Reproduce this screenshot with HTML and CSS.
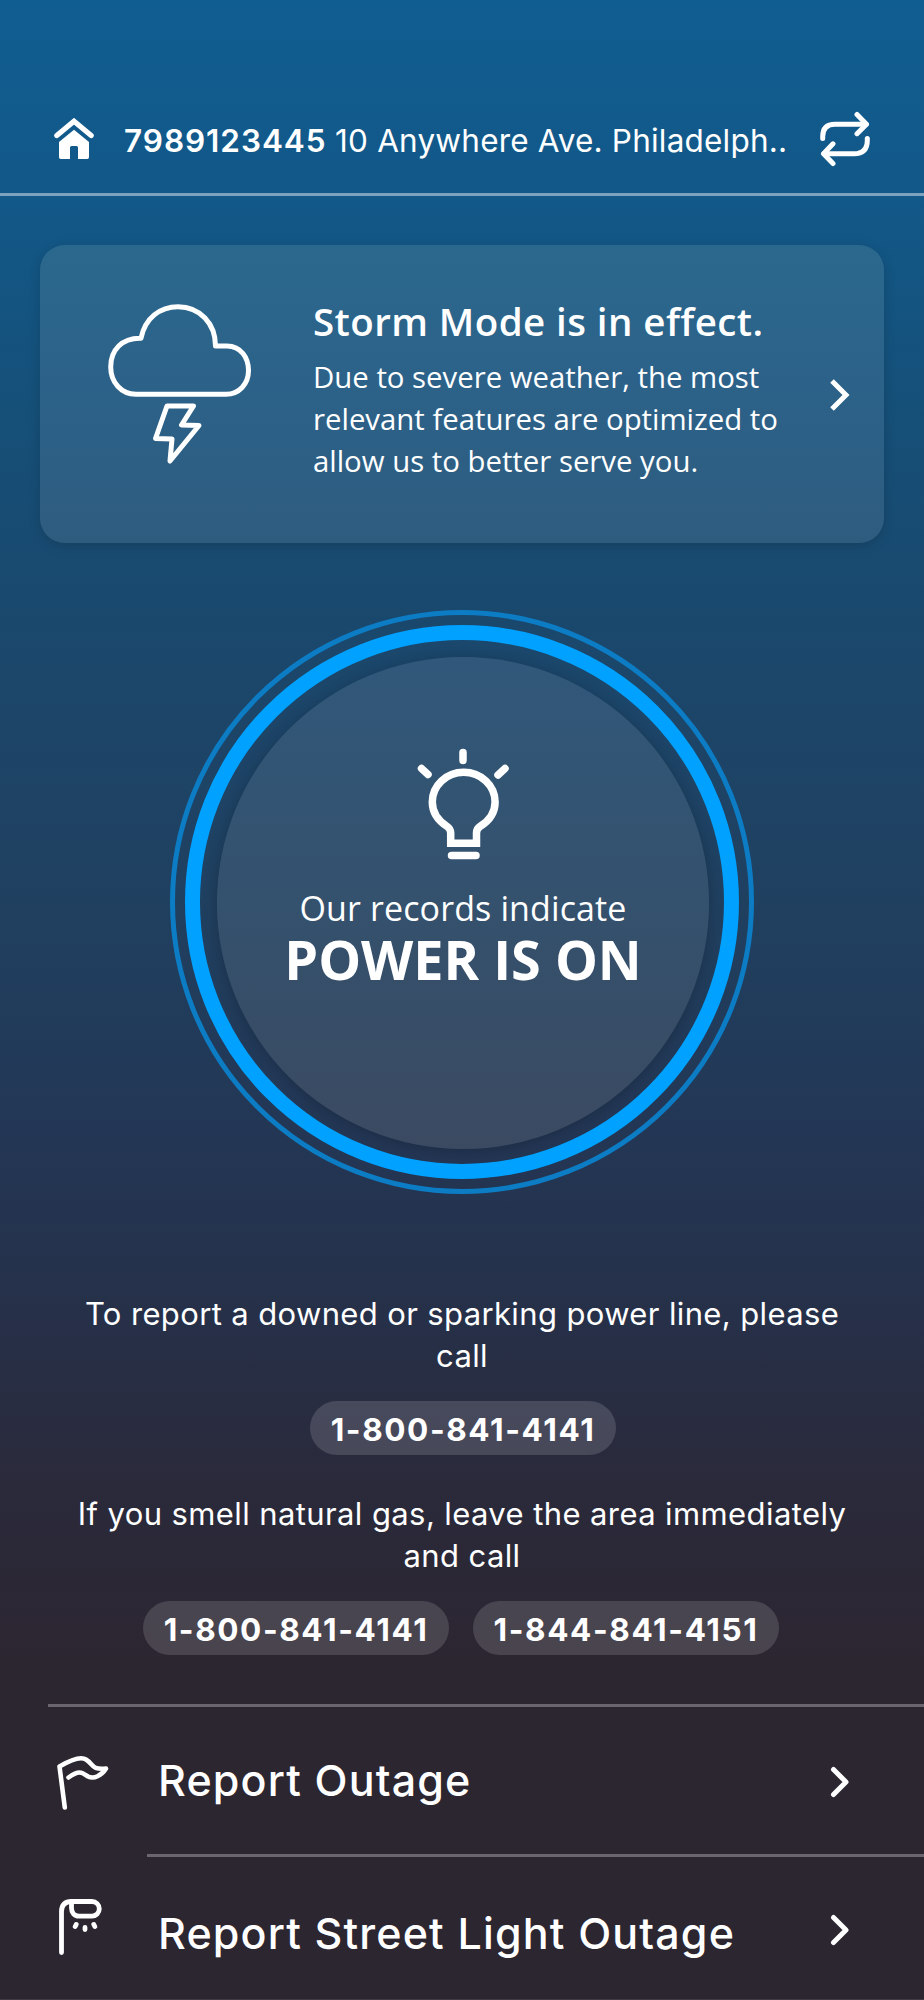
FILE: index.html
```html
<!DOCTYPE html>
<html lang="en">
<head>
    <meta charset="UTF-8">
    <meta name="viewport" content="width=device-width, initial-scale=1.0">
    <title>Storm Mode</title>

    <link rel="stylesheet" href="styles.css">
</head>
<body>

    <!-- Account Bar -->
    <header class="account-bar">
        <svg class="home-icon" width="40" height="42" viewBox="0 0 40 42">
            <path d="M2.8 17.5 20 3.2l17.200 14.300" fill="none" stroke="#fff" stroke-width="5.200" stroke-linecap="round"/>
            <path d="M20 11.800 35 24v15.200a1.800 1.800 0 0 1-1.800 1.800H24V29.500a1.500 1.500 0 0 0-1.500-1.500h-5a1.500 1.500 0 0 0-1.500 1.500V41H6.800A1.800 1.800 0 0 1 5 39.200V24z" fill="#fff"/>
        </svg>
        <div class="account-text">
            <strong class="account-number">7989123445</strong>
            <span class="account-address">10 Anywhere Ave. Philadelph..</span>
        </div>
        <svg class="switch-icon" width="50" height="56" viewBox="0 0 50 56">
            <g fill="none" stroke="#fff" stroke-width="5" stroke-linecap="round" stroke-linejoin="round">
                <path d="M2.700 27.500V25.500Q2.700 13.200 15 13.200H46"/>
                <path d="M37 3.500l9.500 9.700-9.500 9.500"/>
                <path d="M47.300 27.500v2Q47.300 42.800 34 42.800H4"/>
                <path d="M13 32.800l-9.500 10 9.500 9.700"/>
            </g>
        </svg>
    </header>

    <!-- Storm Mode Banner -->
    <section class="storm-card">
        <svg class="storm-icon" width="144" height="160" viewBox="0 0 144 160">
            <g fill="none" stroke="#fff" stroke-width="5" stroke-linecap="round" stroke-linejoin="round">
                <path d="M28 90.200C13 90.200 2.700 78 2.700 63 2.700 46 14 33.800 33 34.300 37 14 52 2.700 70 2.700c22 0 37.500 17 37.500 39.300h11.500c14 0 21.500 12 21.500 24.500 0 13.500-9.500 23.700-22.500 23.700z"/>
                <path d="M59 102h26.500L73.500 121l17.500.5L62 157l2-22-16.500-.5z"/>
            </g>
        </svg>
        <div class="storm-text">
            <h1>Storm Mode is in effect.</h1>
            <p>Due to severe weather, the most<br>relevant features are optimized to<br>allow us to better serve you.</p>
        </div>
        <svg class="storm-arrow" width="22" height="34" viewBox="0 0 22 34">
            <path d="M3 3l14 14L3 31" fill="none" stroke="#fff" stroke-width="5"/>
        </svg>
    </section>

    <!-- Power Status -->
    <section class="power-ring-outer">
        <div class="power-ring">
            <div class="power-status">
                <svg class="bulb-icon" width="94" height="114" viewBox="0 0 94 114">
                    <g fill="none" stroke="#fff" stroke-width="7.500" stroke-linecap="round">
                        <path d="M46 4.500v8M4.500 20.500l6.500 6M88 20.500l-7 6.500M34.500 107.500h24.500"/>
                        <path d="M33.700 95.300V85c0-2.500-1-5-3.700-6.700C21 72.500 15.300 64 15.300 54a31.400 29.700 0 0 1 62.800 0c0 10-5.500 18.500-14.800 24.300-2.800 1.700-3.800 4.200-3.800 6.700v10.300z" stroke-linecap="butt" stroke-linejoin="miter"/>
                    </g>
                </svg>
                <p class="power-label">Our records indicate</p>
                <p class="power-value">POWER IS ON</p>
            </div>
        </div>
    </section>

    <!-- Emergency Contacts -->
    <section class="contacts">
        <p class="contact-power">To report a downed or sparking power line, please<br>call</p>
        <div class="phones phones-power">
            <a class="phone">1-800-841-4141</a>
        </div>
        <p class="contact-gas">If you smell natural gas, leave the area immediately<br>and call</p>
        <div class="phones phones-gas">
            <a class="phone">1-800-841-4141</a>
            <a class="phone">1-844-841-4151</a>
        </div>
    </section>

    <!-- Actions -->
    <nav class="actions">
        <a class="action">
            <svg class="action-icon" width="54" height="58" viewBox="0 0 54 58">
                <path d="M9.800 53.500 4.500 12.500Q24 1 31 5.500C38.500 10 36 16 51 14.500 46.500 21.500 39 25.500 33 22.500 26.500 18 24 16 13.500 23.500" fill="none" stroke="#fff" stroke-width="4.600" stroke-linecap="round" stroke-linejoin="round"/>
            </svg>
            <span class="action-label">Report Outage</span>
            <svg class="action-arrow" width="20" height="32" viewBox="0 0 20 32">
                <path d="M3.500 3.500 16 16 3.500 28.500" fill="none" stroke="#fff" stroke-width="5" stroke-linecap="round" stroke-linejoin="round"/>
            </svg>
        </a>
        <a class="action action-second">
            <svg class="action-icon" width="54" height="60" viewBox="0 0 54 60">
                <g fill="none" stroke="#fff" stroke-width="4.800" stroke-linecap="round" stroke-linejoin="round">
                    <path d="M6.500 55.500V14.500Q6.500 4.500 16.500 4.500"/>
                    <path d="M16.500 4.500H37a7.300 7.300 0 0 1 0 14.600H24c-5 0-7.500-4-7.500-8z"/>
                    <path d="M21.200 27.500l-1 2M30 30.500v2M38.800 27.500l1 2"/>
                </g>
            </svg>
            <span class="action-label">Report Street Light Outage</span>
            <svg class="action-arrow" width="20" height="32" viewBox="0 0 20 32">
                <path d="M3.500 3.500 16 16 3.500 28.500" fill="none" stroke="#fff" stroke-width="5" stroke-linecap="round" stroke-linejoin="round"/>
            </svg>
        </a>
    </nav>

</body>
</html>
```
FILE: styles.css
```css
* {
    box-sizing: border-box;
}

body {
    margin: 0;
    height: 2000px;
    overflow: hidden;
    border-bottom: 1px solid #403a45;
    color: #fff;
    font-family: Inter, "Liberation Sans", sans-serif;
    background: linear-gradient(to bottom, #105d91 0, #125888 200px, #155079 400px, #1a486d 620px, #204060 900px, #233654 1150px, #263048 1320px, #2a2a3b 1480px, #2c2631 1660px, #2c2631 2000px);
}

h1, p {
    margin: 0;
    font-weight: 400;
}

svg {
    display: block;
    flex-shrink: 0;
}

/* Account Bar */
.account-bar {
    display: flex;
    align-items: center;
    height: 196px;
    padding: 84px 54px 0 54px;
    border-bottom: 3px solid rgba(255, 255, 255, 0.45);
}

.account-text {
    display: flex;
    flex: 1;
    margin-left: 30px;
    padding-top: 4px;
    font-size: 31.500px;
    line-height: 40px;
    white-space: nowrap;
}

.account-number {
    width: 211px;
    font-weight: 600;
    letter-spacing: 0.950px;
}

.account-address {
    letter-spacing: 0.200px;
}

/* Storm Mode Banner */
.storm-card {
    display: flex;
    height: 298px;
    margin: 49px 40px 0;
    padding: 55px 33px 0 68px;
    border-radius: 25px;
    background: linear-gradient(to bottom, #2b688d, #2c6289 45%, #2e5c7f);
    box-shadow: 0 3px 12px rgba(0, 0, 0, 0.150);
    font-family: "Open Sans", "Noto Sans", sans-serif;
}

.storm-icon {
    margin-top: 4px;
}

.storm-text {
    flex: 1;
    margin-left: 61px;
    white-space: nowrap;
}

.storm-text h1 {
    font-size: 38.500px;
    font-weight: 600;
    line-height: 42px;
    letter-spacing: 0.430px;
}

.storm-text p {
    margin-top: 14px;
    font-size: 29.350px;
    line-height: 42px;
}

.storm-arrow {
    margin-top: 78px;
}

/* Power Status */
.power-ring-outer {
    width: 584px;
    height: 584px;
    margin: 67px auto 0;
    padding: 10px;
    border: 5px solid #0c7cc4;
    border-radius: 50%;
}

.power-ring {
    height: 554px;
    padding: 17px 0 0 17px;
    border: 15px solid #00a1ff;
    border-radius: 50%;
}

.power-status {
    display: flex;
    flex-direction: column;
    align-items: center;
    width: 492px;
    height: 492px;
    padding-top: 91px;
    border-radius: 50%;
    background: linear-gradient(to bottom, #31587a, #34516d 50%, #3b4a61);
    box-shadow: 0 2px 14px rgba(0, 0, 0, 0.200);
    font-family: "Open Sans", "Noto Sans", sans-serif;
    white-space: nowrap;
}

.bulb-icon {
    margin-left: 2px;
}

.power-label {
    margin-top: 22px;
    font-size: 34px;
    line-height: 48px;
    letter-spacing: 0.120px;
}

.power-value {
    margin-top: -1px;
    font-size: 54px;
    font-weight: 700;
    line-height: 56px;
}

/* Emergency Contacts */
.contacts {
    padding-top: 99px;
    text-align: center;
    font-size: 31px;
    line-height: 42px;
    white-space: nowrap;
}

.contact-power {
    letter-spacing: 0.370px;
}

.contact-gas {
    margin-top: 38px;
    letter-spacing: 0.400px;
}

.phones {
    display: flex;
    justify-content: center;
    gap: 24px;
    margin-top: 24px;
}

.phones-power {
    padding-left: 2px;
}

.phones-gas {
    padding-right: 2px;
}

.phone {
    width: 306px;
    height: 54px;
    border-radius: 28px;
    background: rgba(255, 255, 255, 0.140);
    font-size: 31.500px;
    font-weight: 700;
    line-height: 57px;
    letter-spacing: 1.600px;
}

/* Actions */
.actions {
    margin: 49px 0 0 48px;
    border-top: 3px solid #6b6570;
}

.action {
    display: flex;
    align-items: flex-start;
    height: 147px;
    padding: 47px 74px 0 7px;
}

.action-label {
    flex: 1;
    margin: 0 0 0 49px;
    font-size: 43px;
    font-weight: 500;
    line-height: 52px;
    letter-spacing: 1.150px;
    white-space: nowrap;
}

.action-arrow {
    margin-top: 12px;
}

.action-second {
    margin-left: 99px;
    padding: 40px 74px 0 0;
    border-top: 3px solid #6b6570;
}

.action-second .action-icon {
    margin-left: -92px;
}

.action-second .action-label {
    margin-top: 10px;
}

.action-second .action-arrow {
    margin-top: 17px;
}
```
